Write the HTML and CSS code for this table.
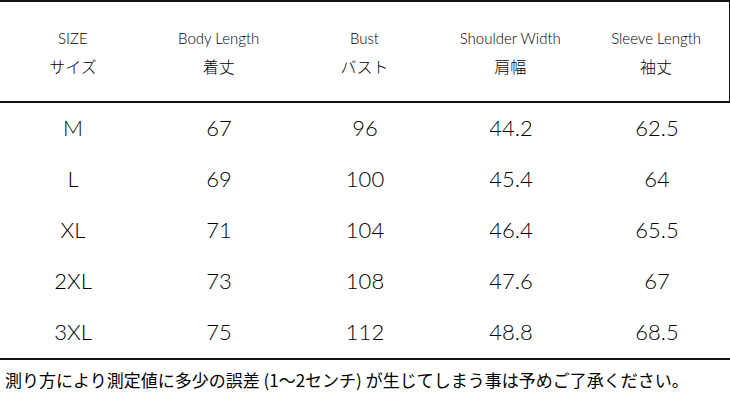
FILE: index.html
```html
<!DOCTYPE html>
<html lang="ja">
<head>
<meta charset="utf-8">
<title>Size Chart</title>
<link rel="stylesheet" href="styles.css">
</head>
<body>
<div class="chart">
  <div class="head">
    <div class="hcell"><span class="en">SIZE</span><span class="ja">サイズ</span></div>
    <div class="hcell"><span class="en">Body Length</span><span class="ja">着丈</span></div>
    <div class="hcell"><span class="en">Bust</span><span class="ja">バスト</span></div>
    <div class="hcell"><span class="en">Shoulder Width</span><span class="ja">肩幅</span></div>
    <div class="hcell"><span class="en">Sleeve Length</span><span class="ja">袖丈</span></div>
  </div>
  <div class="body">
    <div class="row"><span>M</span><span>67</span><span>96</span><span>44.2</span><span>62.5</span></div>
    <div class="row"><span>L</span><span>69</span><span>100</span><span>45.4</span><span>64</span></div>
    <div class="row"><span>XL</span><span>71</span><span>104</span><span>46.4</span><span>65.5</span></div>
    <div class="row"><span>2XL</span><span>73</span><span>108</span><span>47.6</span><span>67</span></div>
    <div class="row"><span>3XL</span><span>75</span><span>112</span><span>48.8</span><span>68.5</span></div>
  </div>
  <p class="note">測り方により測定値に多少の誤差 (1〜2センチ) が生じてしまう事は予めご了承ください。</p>
</div>
</body>
</html>
```

FILE: styles.css
```css
html, body {
  margin: 0;
  padding: 0;
  background: #fff;
}
body {
  width: 730px;
  height: 400px;
  overflow: hidden;
  color: #000;
  font-family: "Lato", "Noto Sans CJK JP", sans-serif;
}
.chart {
  width: 730px;
}
.head {
  display: grid;
  grid-template-columns: repeat(5, 1fr);
  height: 99px;
  border-top: 2px solid #111;
  border-bottom: 2px solid #111;
  border-right: 1px solid #111;
  align-items: center;
}
.hcell {
  display: flex;
  flex-direction: column;
  align-items: center;
}
.hcell .en {
  font-size: 15px;
  line-height: 28px;
  font-weight: 300;
}
.hcell .ja {
  font-family: "Noto Sans CJK JP", sans-serif;
  font-size: 16px;
  line-height: 28px;
  font-weight: 300;
}
.body {
  border-bottom: 2px solid #111;
}
.row {
  display: grid;
  grid-template-columns: repeat(5, 1fr);
  height: 51px;
  align-items: center;
  justify-items: center;
  font-size: 22px;
  font-weight: 300;
}
.row span {
  position: relative;
  top: -1px;
}
.note {
  margin: 0;
  padding: 8px 0 0 5px;
  font-family: "Noto Sans CJK JP", sans-serif;
  font-size: 17px;
  line-height: 24px;
  white-space: nowrap;
}
```
